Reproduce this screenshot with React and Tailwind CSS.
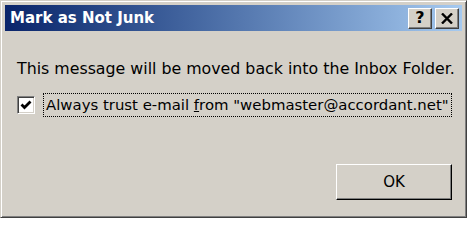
const font = { fontFamily: '"DejaVu Sans", Tahoma, sans-serif' };

function TitleButton({ children }) {
  return (
    <div className="flex h-[21px] w-[24px] items-center justify-center border border-t-white border-l-white border-r-[#404040] border-b-[#404040] bg-[#d4d0c8] shadow-[inset_-1px_-1px_#808080] text-[16px] font-bold leading-none text-black">
      {children}
    </div>
  );
}

export default function App() {
  return (
    <div
      className="flex h-[218px] w-[467px] flex-col border border-[#d4d0c8] border-r-[#404040] border-b-[#404040] bg-[#d4d0c8] p-[4px] shadow-[inset_1px_1px_#fff,inset_-1px_-1px_#808080]"
      style={font}
    >
      <div className="flex h-[26px] items-center justify-between bg-gradient-to-r from-[#0a246a] to-[#a6caf0] pl-[5px] pr-[3px]">
        <span className="text-[15px] font-bold text-white">Mark as Not Junk</span>
        <div className="flex gap-[3px]">
          <TitleButton>?</TitleButton>
          <TitleButton>
            <svg width="12" height="11" viewBox="0 0 12 11">
              <path d="M1 0.5 L11 10.5 M11 0.5 L1 10.5" stroke="#000" strokeWidth="2.4" />
            </svg>
          </TitleButton>
        </div>
      </div>

      <div className="flex flex-1 flex-col pl-[12px] pr-[10px] pt-[29px] text-black">
        <p className="whitespace-nowrap text-[15.8px] leading-[18px]">This message will be moved back into the Inbox Folder.</p>

        <label className="mt-[15px] flex items-center gap-[8px]">
          <span className="flex h-[18px] w-[18px] items-center justify-center border border-t-[#808080] border-l-[#808080] border-r-white border-b-white bg-white shadow-[inset_1px_1px_#404040,inset_-1px_-1px_#d4d0c8]">
            <svg width="12" height="12" viewBox="0 0 12 12">
              <path d="M1.5 5.5 L4.5 8.5 L10.5 2.5" fill="none" stroke="#000" strokeWidth="2.8" />
            </svg>
          </span>
          <span className="whitespace-nowrap border border-dotted border-black px-[2px] py-[2px] text-[14.9px] leading-[18px]">
            Always trust e-mail <span className="underline">f</span>rom "webmaster@accordant.net"
          </span>
        </label>

        <div className="mt-auto mb-[13px] flex justify-end">
          <button className="h-[36px] w-[116px] border border-t-white border-l-white border-r-black border-b-black bg-[#d4d0c8] text-[15px] text-black shadow-[inset_-1px_-1px_#808080]">
            OK
          </button>
        </div>
      </div>
    </div>
  );
}
